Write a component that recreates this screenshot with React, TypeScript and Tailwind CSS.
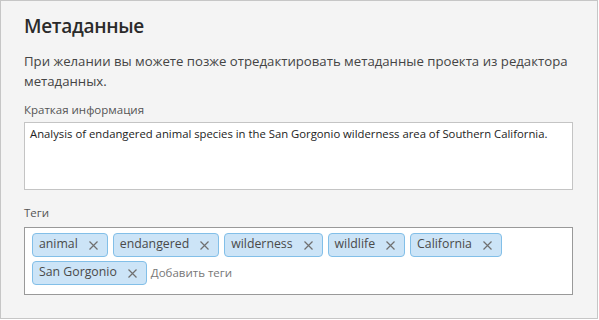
import React from "react";

const tags = ["animal", "endangered", "wilderness", "wildlife", "California", "San Gorgonio"];

function Tag({ label }: { label: string }) {
  return (
    <span className="flex h-[24px] items-center rounded-[4px] border border-[#82bfe8] bg-[#cce4f7] pl-[6px] pr-[9px] text-[12.3px] text-[#4a4a4a]">
      <span className="leading-none pb-[2px]">{label}</span>
      <svg width="9" height="9" viewBox="0 0 9 9" className="ml-[11px]">
        <path d="M0.5 0.5 L8.5 8.5 M8.5 0.5 L0.5 8.5" stroke="#707070" strokeWidth="1.2" />
      </svg>
    </span>
  );
}

export default function App() {
  return (
    <div
      className="h-[319px] w-[598px] border border-[#c6c6c6] bg-[#f4f4f4] pl-[23px] pr-[20px] pt-[10px] text-[#333]"
      style={{ fontFamily: '"Open Sans", "Noto Sans", sans-serif' }}
    >
      <h1 className="text-[19px] font-semibold leading-[30px] tracking-[-0.3px] text-[#2b2b2b]">Метаданные</h1>
      <p className="mt-[10px] text-[13.2px] leading-[20px] text-[#444]">
        При желании вы можете позже отредактировать метаданные проекта из редактора метаданных.
      </p>
      <div className="mt-[11px] text-[11.5px] leading-[16px] text-[#555]">Краткая информация</div>
      <div className="mr-[4px] mt-[4px] h-[68px] border border-[#c4c4c4] bg-white px-[5px] pt-[3px] text-[11.3px] leading-[16px] text-[#222]">
        Analysis of endangered animal species in the San Gorgonio wilderness area of Southern California.
      </div>
      <div className="mt-[15px] text-[11.5px] leading-[16px] text-[#555]">Теги</div>
      <div className="mr-[4px] mt-[6px] flex h-[68px] flex-wrap content-start items-center gap-x-[5px] gap-y-[4px] border border-[#999] bg-white px-[7px] pt-[5px]">
        {tags.map((t) => (
          <Tag key={t} label={t} />
        ))}
        <span className="-ml-[1px] text-[11.5px] text-[#777]">Добавить теги</span>
      </div>
    </div>
  );
}
